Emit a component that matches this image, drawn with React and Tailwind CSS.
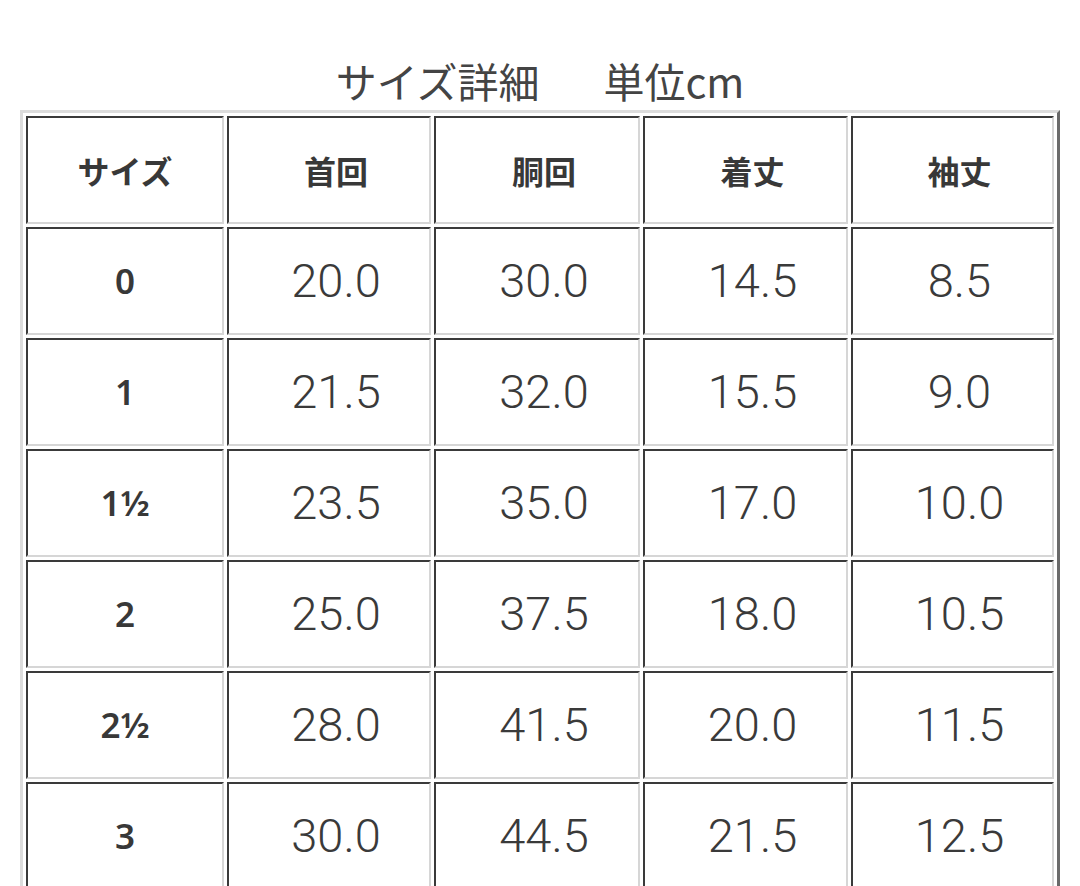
const headers = ["サイズ", "首回", "胴回", "着丈", "袖丈"];

const rows = [
  ["0", "20.0", "30.0", "14.5", "8.5"],
  ["1", "21.5", "32.0", "15.5", "9.0"],
  ["1½", "23.5", "35.0", "17.0", "10.0"],
  ["2", "25.0", "37.5", "18.0", "10.5"],
  ["2½", "28.0", "41.5", "20.0", "11.5"],
  ["3", "30.0", "44.5", "21.5", "12.5"],
];

const cell =
  "flex h-[108px] items-center justify-center border-2 border-t-[#3a3a3a] border-l-[#3a3a3a] border-r-[#d6d6d6] border-b-[#d6d6d6] bg-white";

export default function App() {
  return (
    <div className="h-[886px] w-full overflow-hidden bg-white px-[20px] pt-[56px] text-[#333]">
      <div className="flex h-[48px] items-center justify-center font-['Noto_Sans_CJK_JP',sans-serif] text-[41px] leading-none text-[#444]">
        <span>サイズ詳細</span>
        <span className="ml-[64px]">単位cm</span>
      </div>

      <div className="mt-[6px] grid w-[1040px] grid-cols-[198px_204px_206px_205px_203px] gap-[3px] border-[3px] border-t-[#dcdcdc] border-l-[#dcdcdc] border-r-[#6a6a6a] border-b-[#6a6a6a] p-[3px]">
        {headers.map((h, i) => (
          <div
            key={h}
            className={`${cell} font-['Noto_Sans_CJK_JP',sans-serif] text-[32px] font-bold text-[#383838] ${i > 0 ? "pl-[14px]" : ""}`}
          >
            {h}
          </div>
        ))}

        {rows.map((row) =>
          row.map((v, i) =>
            i === 0 ? (
              <div
                key={row[0] + i}
                className={`${cell} font-['Noto_Sans',sans-serif] text-[35px] font-semibold text-[#383838]`}
              >
                {v}
              </div>
            ) : (
              <div
                key={row[0] + i}
                className={`${cell} pl-[14px] font-['Roboto','Liberation_Sans',sans-serif] text-[47px] font-light text-[#3a3a3a]`}
              >
                {v}
              </div>
            )
          )
        )}
      </div>
    </div>
  );
}
